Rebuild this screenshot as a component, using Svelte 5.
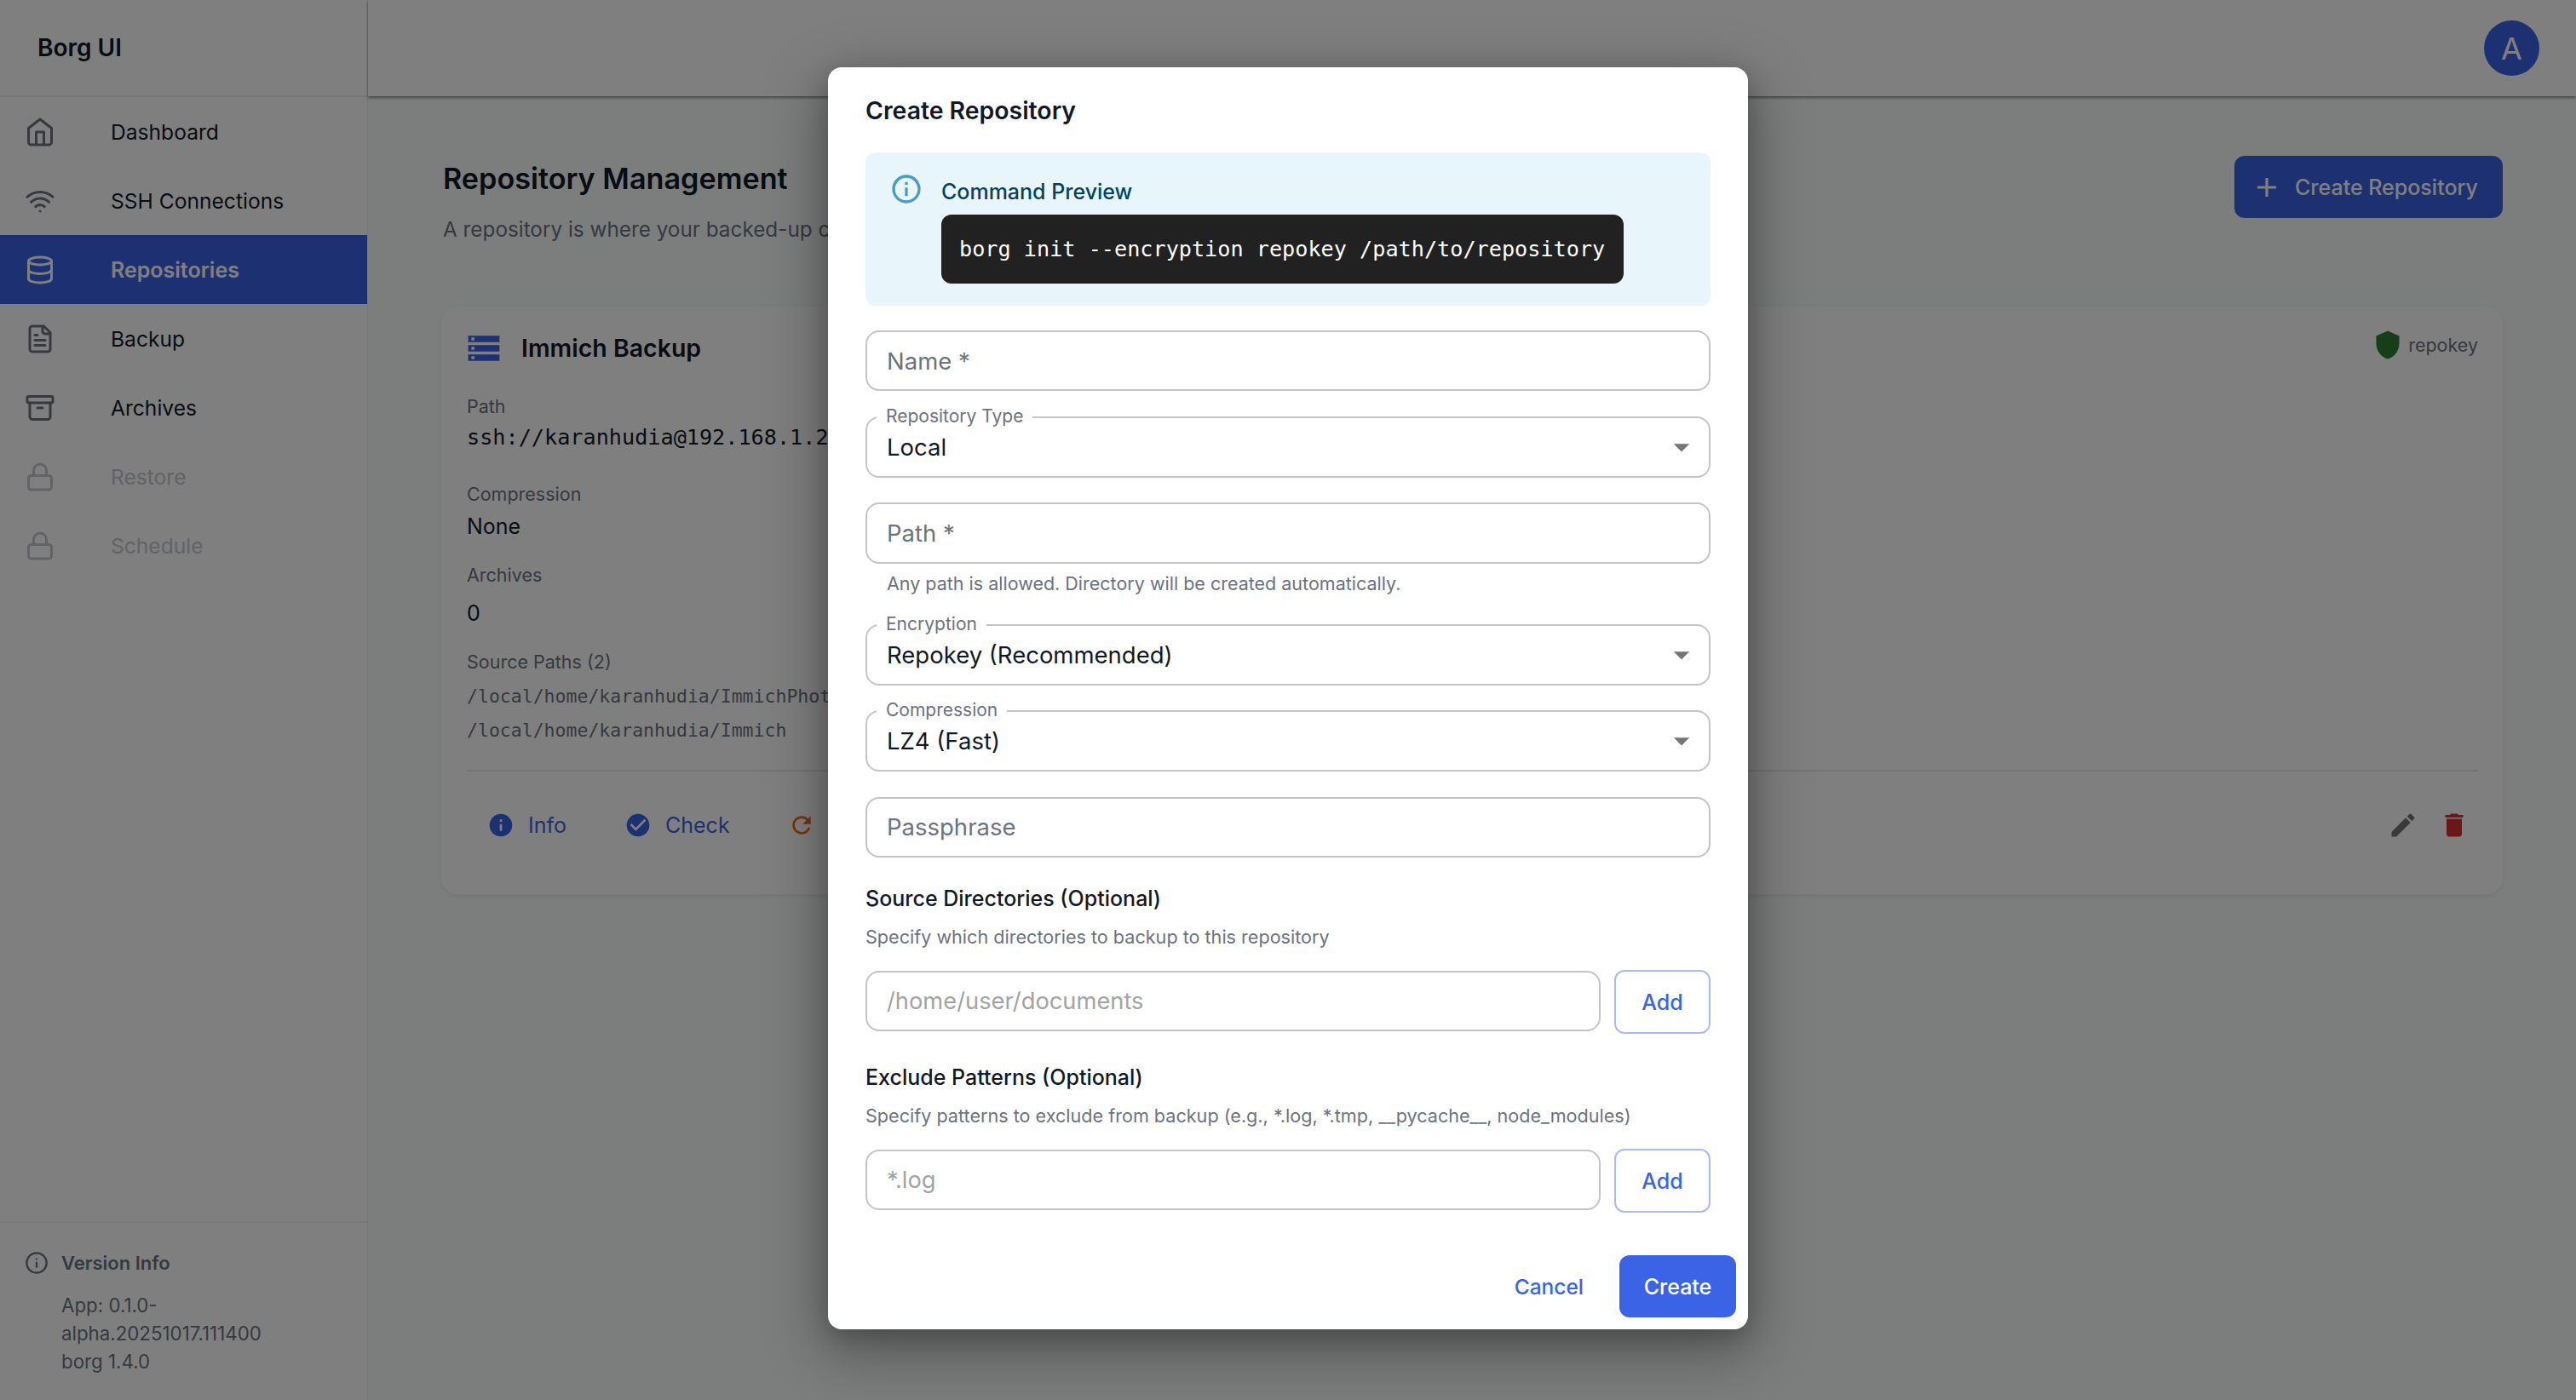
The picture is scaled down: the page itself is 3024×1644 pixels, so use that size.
<script>
  const navItems = [
    { label: 'Dashboard', icon: 'home' },
    { label: 'SSH Connections', icon: 'wifi' },
    { label: 'Repositories', icon: 'database', active: true },
    { label: 'Backup', icon: 'file' },
    { label: 'Archives', icon: 'archive' },
    { label: 'Restore', icon: 'lock', disabled: true },
    { label: 'Schedule', icon: 'lock', disabled: true }
  ];

  const mui = {
    info: 'M12 2C6.48 2 2 6.48 2 12s4.48 10 10 10 10-4.48 10-10S17.52 2 12 2zm1 15h-2v-6h2v6zm0-8h-2V7h2v2z',
    check: 'M12 2C6.48 2 2 6.48 2 12s4.48 10 10 10 10-4.48 10-10S17.52 2 12 2zm-2 15-5-5 1.41-1.41L10 14.17l7.59-7.59L19 8l-9 9z',
    refresh: 'M17.65 6.35C16.2 4.9 14.21 4 12 4c-4.42 0-7.99 3.58-7.99 8s3.57 8 7.99 8c3.73 0 6.84-2.55 7.73-6h-2.08c-.82 2.33-3.04 4-5.65 4-3.31 0-6-2.69-6-6s2.69-6 6-6c1.66 0 3.14.69 4.22 1.78L13 11h7V4l-2.35 2.35z',
    edit: 'M3 17.25V21h3.75L17.81 9.94l-3.75-3.75L3 17.25zM20.71 7.04c.39-.39.39-1.02 0-1.41l-2.34-2.34a.9959.9959 0 0 0-1.41 0l-1.83 1.83 3.75 3.75 1.83-1.83z',
    trash: 'M6 19c0 1.1.9 2 2 2h8c1.1 0 2-.9 2-2V7H6v12zM19 4h-3.5l-1-1h-5l-1 1H5v2h14V4z',
    storage: 'M2 20h20v-4H2v4zm2-3h2v2H4v-2zM2 4v4h20V4H2zm4 3H4V5h2v2zm-4 7h20v-4H2v4zm2-3h2v2H4v-2z',
    shield: 'M12 1 3 5v6c0 5.55 3.84 10.74 9 12 5.16-1.26 9-6.45 9-12V5l-9-4z',
    plus: 'M19 13h-6v6h-2v-6H5v-2h6V5h2v6h6v2z',
    infoOutline: 'M11 7h2v2h-2zm0 4h2v6h-2zm1-9C6.48 2 2 6.48 2 12s4.48 10 10 10 10-4.48 10-10S17.52 2 12 2zm0 18c-4.41 0-8-3.59-8-8s3.59-8 8-8 8 3.59 8 8-3.59 8-8 8z',
    drop: 'm7 10 5 5 5-5z'
  };

  const selects = {
    type: { label: 'Repository Type', value: 'Local' },
    encryption: { label: 'Encryption', value: 'Repokey (Recommended)' },
    compression: { label: 'Compression', value: 'LZ4 (Fast)' }
  };
</script>

{#snippet navIcon(name)}
  <svg class="nav-icon" viewBox="0 0 24 24" fill="none" stroke="currentColor" stroke-width="2" stroke-linecap="round" stroke-linejoin="round">
    {#if name === 'home'}
      <path d="m3 9 9-7 9 7v11a2 2 0 0 1-2 2H5a2 2 0 0 1-2-2z" /><polyline points="9 22 9 12 15 12 15 22" />
    {:else if name === 'wifi'}
      <path d="M12 20h.01" /><path d="M2 8.82a15 15 0 0 1 20 0" /><path d="M5 12.859a10 10 0 0 1 14 0" /><path d="M8.5 16.429a5 5 0 0 1 7 0" />
    {:else if name === 'database'}
      <ellipse cx="12" cy="5" rx="9" ry="3" /><path d="M3 5v14a9 3 0 0 0 18 0V5" /><path d="M3 12a9 3 0 0 0 18 0" />
    {:else if name === 'file'}
      <path d="M15 2H6a2 2 0 0 0-2 2v16a2 2 0 0 0 2 2h12a2 2 0 0 0 2-2V7Z" /><path d="M14 2v4a2 2 0 0 0 2 2h4" /><path d="M10 9H8" /><path d="M16 13H8" /><path d="M16 17H8" />
    {:else if name === 'archive'}
      <rect width="20" height="5" x="2" y="3" rx="1" /><path d="M4 8v11a2 2 0 0 0 2 2h12a2 2 0 0 0 2-2V8" /><path d="M10 12h4" />
    {:else}
      <rect width="18" height="11" x="3" y="11" rx="2" ry="2" /><path d="M7 11V7a5 5 0 0 1 10 0v4" />
    {/if}
  </svg>
{/snippet}

{#snippet icon(d, cls)}
  <svg class={cls} viewBox="0 0 24 24" fill="currentColor"><path {d} /></svg>
{/snippet}

{#snippet selectField(s)}
  <div class="field select">
    <span class="notch">{s.label}</span>
    <span class="value">{s.value}</span>
    {@render icon(mui.drop, 'drop')}
  </div>
{/snippet}

<div class="app">
  <aside class="sidebar">
    <div class="brand">Borg UI</div>
    <nav>
      {#each navItems as item}
        <div class="nav-row" class:active={item.active} class:disabled={item.disabled}>
          {@render navIcon(item.icon)}
          <span>{item.label}</span>
        </div>
      {/each}
    </nav>
    <div class="version">
      <div class="version-head">
        <svg class="version-icon" viewBox="0 0 24 24" fill="none" stroke="currentColor" stroke-width="2" stroke-linecap="round" stroke-linejoin="round"><circle cx="12" cy="12" r="10" /><path d="M12 16v-4" /><path d="M12 8h.01" /></svg>
        <strong>Version Info</strong>
      </div>
      <p>App: 0.1.0-<br />alpha.20251017.111400<br />borg 1.4.0</p>
    </div>
  </aside>

  <div class="main">
    <header class="topbar"><div class="avatar">A</div></header>
    <section class="content">
      <div class="page-head">
        <div>
          <h1>Repository Management</h1>
          <p class="lead">A repository is where your backed-up copies</p>
        </div>
        <button class="primary-btn">{@render icon(mui.plus, 'plus')}Create Repository</button>
      </div>

      <article class="card">
        <div class="card-head">
          {@render icon(mui.storage, 'storage')}
          <h2>Immich Backup</h2>
          <span class="enc">{@render icon(mui.shield, 'shield')}repokey</span>
        </div>
        <div class="label path-label">Path</div>
        <div class="mono-value">ssh://karanhudia@192.168.1.2</div>
        <div class="label comp-label">Compression</div>
        <div class="value-text tight">None</div>
        <div class="label arch-label">Archives</div>
        <div class="value-text spaced">0</div>
        <div class="label src-label">Source Paths (2)</div>
        <div class="src-list">
          <div>/local/home/karanhudia/ImmichPhot</div>
          <div>/local/home/karanhudia/Immich</div>
        </div>
        <div class="card-actions">
          <span class="action blue">{@render icon(mui.info, 'action-icon')}Info</span>
          <span class="action blue">{@render icon(mui.check, 'action-icon')}Check</span>
          <span class="action orange">{@render icon(mui.refresh, 'action-icon')}</span>
          <span class="action-right">
            {@render icon(mui.edit, 'tool-icon grey')}
            {@render icon(mui.trash, 'tool-icon red')}
          </span>
        </div>
      </article>
    </section>
  </div>

  <div class="backdrop">
    <div class="modal">
      <h3 class="modal-title">Create Repository</h3>

      <div class="alert">
        {@render icon(mui.infoOutline, 'alert-icon')}
        <div>
          <div class="alert-title">Command Preview</div>
          <code>borg init --encryption repokey /path/to/repository</code>
        </div>
      </div>

      <div class="form">
        <input class="field" placeholder="Name *" />
        {@render selectField(selects.type)}
        <input class="field" placeholder="Path *" />
        <p class="helper">Any path is allowed. Directory will be created automatically.</p>
        {@render selectField(selects.encryption)}
        {@render selectField(selects.compression)}
        <input class="field" placeholder="Passphrase" />
      </div>

      <h4 class="source-title">Source Directories (Optional)</h4>
      <p class="hint">Specify which directories to backup to this repository</p>
      <div class="add-row">
        <input class="add-input" placeholder="/home/user/documents" />
        <button class="add-btn">Add</button>
      </div>

      <h4 class="exclude-title">Exclude Patterns (Optional)</h4>
      <p class="hint">Specify patterns to exclude from backup (e.g., *.log, *.tmp, __pycache__, node_modules)</p>
      <div class="add-row">
        <input class="add-input" placeholder="*.log" />
        <button class="add-btn">Add</button>
      </div>

      <div class="modal-actions">
        <button class="text-btn">Cancel</button>
        <button class="create-btn">Create</button>
      </div>
    </div>
  </div>
</div>

<style>
  :global(body) {
    margin: 0;
    font-family: Inter, 'Liberation Sans', sans-serif;
    color: #111827;
    overflow: hidden;
  }
  * { box-sizing: border-box; }
  h1, h2, h3, h4, p { margin: 0; font-weight: 600; }
  p { font-weight: 400; }
  button { font-family: inherit; border: 0; cursor: pointer; }

  .app {
    position: relative;
    display: grid;
    grid-template-columns: 432px 1fr;
    height: 1644px;
    width: 3024px;
    background: #f9fcfa;
    overflow: hidden;
  }

  /* sidebar */
  .sidebar {
    display: flex;
    flex-direction: column;
    background: #fff;
    border-right: 1px solid #ececec;
  }
  .brand {
    height: 114px;
    padding-left: 44px;
    display: flex;
    align-items: center;
    font-size: 28px;
    font-weight: 600;
    border-bottom: 2px solid #ececec;
  }
  .nav-row {
    height: 81px;
    display: flex;
    align-items: center;
    padding-left: 29px;
    gap: 65px;
    font-size: 24.6px;
    color: #111827;
  }
  .nav-icon { width: 36px; height: 36px; color: #6b7280; flex: none; }
  .nav-row.active { background: #3b63e5; color: #fff; font-weight: 600; font-size: 25px; }
  .nav-row.active .nav-icon { color: #fff; }
  .nav-row.disabled, .nav-row.disabled .nav-icon { color: #c4c6cc; }
  .version {
    margin-top: auto;
    height: 210px;
    border-top: 2px solid #f0f0f0;
    padding: 30px 0 0 29px;
    color: #6b7280;
  }
  .version-head { display: flex; align-items: center; gap: 15px; font-size: 22px; height: 34px; }
  .version-head strong { font-weight: 600; }
  .version-icon { width: 28px; height: 28px; }
  .version p { margin: 16px 0 0 43px; font-size: 22.3px; line-height: 33px; }

  /* main */
  .topbar {
    height: 113px;
    background: #fff;
    display: flex;
    align-items: center;
    justify-content: flex-end;
    padding: 0 43px 0 0;
    box-shadow: 0 2px 3px rgba(0, 0, 0, 0.45);
  }
  .avatar {
    width: 65px;
    height: 65px;
    border-radius: 50%;
    background: #3b63e5;
    color: #fff;
    display: flex;
    align-items: center;
    justify-content: center;
    font-size: 36px;
  }
  .content { padding: 70px 86px 0 86px; }
  .page-head { display: flex; justify-content: space-between; padding-left: 2px; height: 177px; }
  h1 { font-size: 34.2px; line-height: 50px; margin-top: 2px; }
  .lead { font-size: 24.3px; color: #6b7280; line-height: 34px; margin-top: 17px; white-space: nowrap; }
  .primary-btn {
    height: 73px;
    width: 315px;
    border-radius: 12px;
    background: #3b63e5;
    color: #fff;
    font-size: 25px;
    font-weight: 500;
    display: flex;
    align-items: center;
    gap: 14px;
    padding: 0 0 0 19px;
  }
  .plus { width: 38px; height: 38px; flex: none; }

  .card {
    height: 690px;
    background: #fff;
    border-radius: 20px;
    padding: 28px 29px 0 30px;
    box-shadow: 0 2px 6px rgba(0, 0, 0, 0.08);
  }
  .card-head { display: flex; align-items: center; height: 40px; }
  .storage { width: 44px; height: 44px; margin-left: -2px; color: #3b63e5; margin-top: 2px; }
  h2 { font-size: 28.5px; margin-left: 22px; }
  .enc { margin-left: auto; margin-top: -6px; display: flex; align-items: center; gap: 6px; font-size: 21.5px; color: #6b7280; }
  .shield { width: 36px; height: 36px; color: #2e7d32; }
  .label { font-size: 21.5px; line-height: 30px; color: #6b7280; }
  .path-label { margin-top: 34px; }
  .comp-label { margin-top: 33px; }
  .arch-label { margin-top: 24px; }
  .src-label { margin-top: 24px; }
  .mono-value { font-family: 'DejaVu Sans Mono', monospace; font-size: 25.2px; line-height: 36px; margin-top: 4px; white-space: nowrap; }
  .value-text { font-size: 25px; line-height: 36px; }
  .tight { margin-top: 5px; }
  .spaced { margin-top: 12px; }
  .src-list { margin-top: 6px; font-family: 'DejaVu Sans Mono', monospace; font-size: 21.5px; line-height: 40px; color: #6b7280; }
  .card-actions {
    margin-top: 26px;
    border-top: 2px solid #e5e7eb;
    padding: 45px 0 0 24px;
    display: flex;
    align-items: center;
    gap: 68px;
    font-size: 25px;
  }
  .action { display: flex; align-items: center; gap: 16px; line-height: 36px; }
  .blue { color: #3b63e5; }
  .orange { color: #ed6c02; }
  .action-icon { width: 32px; height: 32px; flex: none; }
  .action-right { margin-left: auto; display: flex; gap: 24px; margin-right: 10px; }
  .tool-icon { width: 36px; height: 36px; }
  .grey { color: #757575; }
  .red { color: #d32f2f; }

  /* modal */
  .backdrop {
    position: absolute;
    inset: 0;
    padding-bottom: 4px;
    background: rgba(0, 0, 0, 0.5);
    display: flex;
    align-items: center;
    justify-content: center;
  }
  .modal {
    width: 1080px;
    background: #fff;
    border-radius: 16px;
    padding: 29px 44px 14px;
    box-shadow: 0 22px 70px 8px rgba(0, 0, 0, 0.3), 0 10px 30px rgba(0, 0, 0, 0.2);
  }
  .modal-title { font-size: 28.4px; line-height: 44px; }
  .alert {
    margin-top: 27px;
    height: 180px;
    background: #e8f5fa;
    border-radius: 12px;
    padding: 27px 0 0 28px;
    display: flex;
    gap: 21px;
  }
  .alert-icon { width: 40px; height: 40px; color: #4a9cc0; flex: none; margin-top: -4px; }
  .alert-title { font-size: 25px; line-height: 40px; color: #014361; font-weight: 500; margin-top: -1px; }
  code {
    display: block;
    margin-top: 7px;
    width: 801px;
    height: 81px;
    line-height: 81px;
    padding-left: 21px;
    background: #212121;
    color: #fff;
    border-radius: 12px;
    font-family: 'DejaVu Sans Mono', monospace;
    font-size: 25.2px;
    white-space: nowrap;
  }

  .form { margin-top: 29px; display: flex; flex-direction: column; gap: 29.7px; }
  .field, .add-input {
    height: 71.5px;
    border: 2px solid #c4c4c8;
    border-radius: 16px;
    background: #fff;
    padding: 0 23px;
    font-family: inherit;
    font-size: 27.5px;
    color: #111827;
    outline: none;
  }
  .field::placeholder { color: #6b7280; opacity: 1; }
  .add-input::placeholder { color: #a3a3a3; opacity: 1; }
  .select { position: relative; display: flex; align-items: center; }
  .notch {
    position: absolute;
    left: 11px;
    top: -14px;
    padding: 0 11px;
    background: #fff;
    font-size: 21px;
    line-height: 24px;
    color: #6b7280;
  }
  .value { line-height: 36px; }
  .drop { position: absolute; right: 10px; top: 12px; width: 44px; height: 44px; color: #757575; }
  .helper { margin-top: -22px; margin-bottom: 4px; padding-left: 25px; font-size: 21.5px; line-height: 30px; color: #6b7280; }

  h4 { font-size: 25px; line-height: 36px; font-weight: 500; }
  .source-title { margin-top: 30px; }
  .exclude-title { margin-top: 33px; }
  .hint { margin-top: 12px; font-size: 21.6px; line-height: 30px; color: #6b7280; }
  .add-row { margin-top: 24px; display: flex; gap: 16px; align-items: flex-start; }
  .add-input { flex: 1; min-width: 0; height: 71px; margin-top: 1px; font-size: 27.3px; }
  .add-btn {
    width: 113px;
    height: 75px;
    flex: none;
    background: #fff;
    border: 2px solid #a9bbf3;
    border-radius: 12px;
    color: #3b63e5;
    font-size: 25px;
    font-weight: 500;
  }
  .modal-actions { margin: 50px -30px 0 0; display: flex; justify-content: flex-end; align-items: center; gap: 26px; }
  .text-btn { background: none; color: #3b63e5; font-size: 24.5px; font-weight: 500; padding: 0 16px; height: 73px; }
  .create-btn { width: 137px; height: 73px; background: #3b63e5; color: #fff; border-radius: 12px; font-size: 25px; font-weight: 500; }
</style>
